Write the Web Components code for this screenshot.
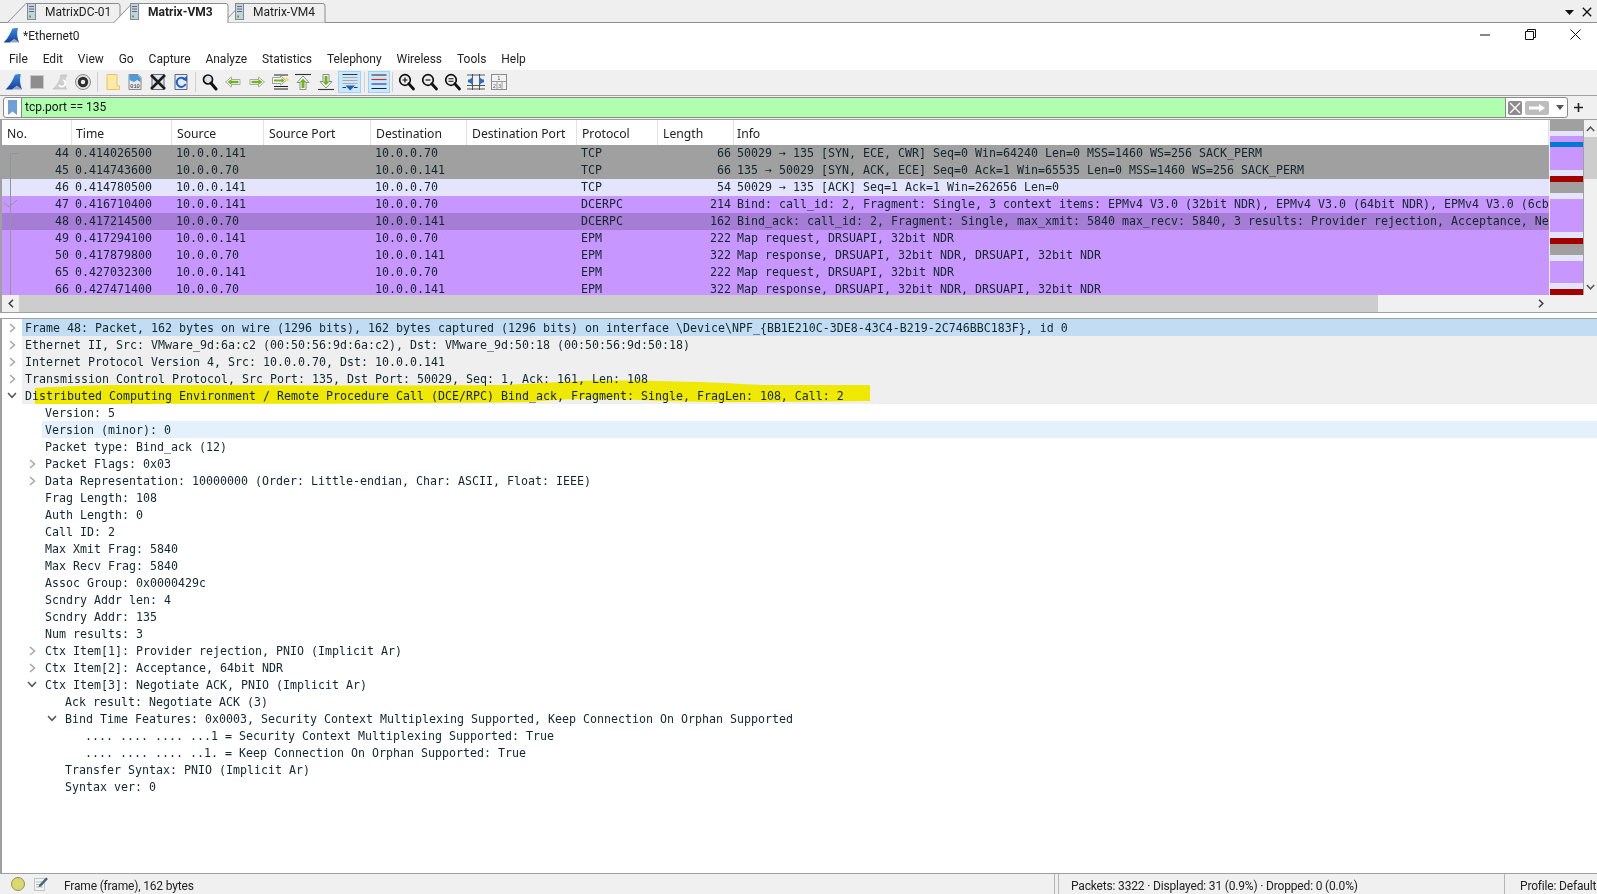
<!DOCTYPE html>
<html>
<head>
<meta charset="utf-8">
<title>Wireshark</title>
<style>
  html, body { margin: 0; padding: 0; height: 100%; overflow: hidden; background: #fff; }
  body { display: flex; flex-direction: column; height: 894px; font: 12px Roboto, "Noto Sans", sans-serif; color: #111; }
</style>
</head>
<body>
<ws-tabbar></ws-tabbar>
<ws-titlebar title-text="*Ethernet0"></ws-titlebar>
<ws-menubar></ws-menubar>
<ws-toolbar></ws-toolbar>
<ws-filterbar value="tcp.port == 135"></ws-filterbar>
<ws-packetlist></ws-packetlist>
<ws-treepane></ws-treepane>
<ws-statusbar></ws-statusbar>

<script>
const MONO = '"DejaVu Sans Mono", "Liberation Mono", monospace';

const SHARK = (id) => `
  <defs><linearGradient id="${id}" x1="0" y1="0" x2="0" y2="1"><stop offset="0" stop-color="#3d8ae0"/><stop offset="1" stop-color="#123f9e"/></linearGradient></defs>
  <path d="M.5 16.5 C5 13 8 6 10 1.7 C12 1 14 1 15.8 1.2 C14.5 6 14.8 11 17 16.5 L12 13 L7 16.5 Z" fill="url(#${id})"/>
  <path d="M7 16.5 L12 12.6 L17 16.5 Z" fill="#9aa8b8"/>`;

const ICONS = {
  shark: SHARK("fin"),
  stop: `<rect x="2.5" y="2.5" width="13" height="13" fill="#8e8e8e" stroke="#c9c9c9"/>`,
  restart: `<path d="M2 16 C6 13 9 8 10 2 L16 2 C13 7 13 12 15.5 16 Z" fill="#cfcfcf" stroke="#bdbdbd" stroke-width=".7"/><path d="M8 12 A3.4 3.4 0 1 0 12 7" fill="none" stroke="#fff" stroke-width="1.6"/>`,
  gear: `<circle cx="9" cy="9" r="7.5" fill="#e2e2e2" stroke="#8a8a8a"/><circle cx="9" cy="9" r="5.2" fill="#2e2e2e"/><circle cx="9" cy="9" r="2.2" fill="#eee"/>`,
  folder: `<path d="M3 1.5 H13 V13 H15.5 V16.5 H3 Z" fill="#fdeaa6" stroke="#eec25a"/>`,
  file: `<path d="M3 1.5 H12 L15 4.5 V16.5 H3 Z" fill="#e8e8e8" stroke="#888"/><path d="M3.5 2 H11.5 L14.5 5 V9 L11 7 L8 9 L3.5 7 Z" fill="#4a9be0"/><text x="9" y="14.6" font-size="5.4" font-family="Liberation Mono" text-anchor="middle" fill="#333">010</text>`,
  close: `<path d="M3 1.5 H15 V16.5 H3 Z" fill="#dfe6ee" stroke="#667"/><path d="M2 2 L16 16 M16 2 L2 16" stroke="#1d1d1d" stroke-width="2.6"/>`,
  reload: `<path d="M3 1.5 H15 V16.5 H3 Z" fill="#e4ebf2" stroke="#667"/><path d="M13 6.5 A4.6 4.6 0 1 0 13.6 11" fill="none" stroke="#1b63c8" stroke-width="2"/><path d="M10.5 6.5 L15 3 L15 8.5 Z" fill="#1b63c8"/>`,
  find: `<circle cx="7" cy="6.5" r="4.5" fill="#dde2e6" stroke="#111" stroke-width="1.7"/><path d="M10 10 L15 16" stroke="#111" stroke-width="3" stroke-linecap="round"/>`,
  back: `<path d="M1.5 9 L7.5 4 V6.5 H16 V11.5 H7.5 V14 Z" fill="#fff" stroke="#a8a8a8"/><path d="M3.5 9 L7.5 6 V7.8 H14.5 V10.2 H7.5 V12 Z" fill="#6db51e"/>`,
  forward: `<path d="M16.5 9 L10.5 4 V6.5 H2 V11.5 H10.5 V14 Z" fill="#fff" stroke="#a8a8a8"/><path d="M14.5 9 L10.5 6 V7.8 H3.5 V10.2 H10.5 V12 Z" fill="#6db51e"/>`,
  go: `<path d="M3 2 H17 M3 16 H17 M3 13.5 H17" stroke="#222" stroke-width="1.1"/><path d="M1.5 4.5 H9.5 V2.8 L15 7.5 L9.5 12 V10.5 H1.5 Z" fill="#fff" stroke="#8a8a8a" stroke-width=".8"/><path d="M3 6.6 H10.5 V5 L13.5 7.5 L10.5 10 V8.5 H3 Z" fill="#6db51e"/><rect x="14.5" y="5" width="3" height="3" fill="#f3e64a"/>`,
  first: `<path d="M1 1.5 H17" stroke="#333" stroke-width="1.1"/><path d="M9 3 L15 9.5 H12 V16.5 H6 V9.5 H3 Z" fill="#fff" stroke="#8a8a8a"/><path d="M9 5.5 L12.5 9.5 H10.5 V15 H7.5 V9.5 H5.5 Z" fill="#6db51e"/>`,
  last: `<path d="M1 16.5 H17" stroke="#333" stroke-width="1.1"/><path d="M9 15 L15 8.5 H12 V1.5 H6 V8.5 H3 Z" fill="#fff" stroke="#8a8a8a"/><path d="M9 12.5 L12.5 8.5 H10.5 V3 H7.5 V8.5 H5.5 Z" fill="#6db51e"/>`,
  autoscroll: `<path d="M1.5 4.5 H16.5 M1.5 7.5 H16.5 M1.5 10.5 H16.5" stroke="#aaa" stroke-width="1"/><path d="M1.5 1.5 H16.5 M1.5 14.5 H5 M13 14.5 H16.5" stroke="#333" stroke-width="1.2"/><path d="M4.5 12.5 H14 L9.2 17.5 Z" fill="#1d5fb0"/>`,
  colorize: `<path d="M1.5 2 H16.5 M1.5 15.5 H16.5" stroke="#222" stroke-width="1.2"/><path d="M1.5 6.5 H16.5" stroke="#d22d2d" stroke-width="1.2"/><path d="M1.5 11 H16.5" stroke="#2a3fa8" stroke-width="1.2"/>`,
  zoomin: `<circle cx="7" cy="7" r="5.3" fill="#eee" stroke="#111" stroke-width="1.7"/><path d="M4.5 7 H9.5 M7 4.5 V9.5" stroke="#111" stroke-width="1.2"/><path d="M10.8 10.8 L15.5 16" stroke="#111" stroke-width="2.8" stroke-linecap="round"/>`,
  zoomout: `<circle cx="7" cy="7" r="5.3" fill="#eee" stroke="#111" stroke-width="1.7"/><path d="M4.5 7 H9.5" stroke="#111" stroke-width="1.2"/><path d="M10.8 10.8 L15.5 16" stroke="#111" stroke-width="2.8" stroke-linecap="round"/>`,
  zoomreset: `<circle cx="7" cy="7" r="5.3" fill="#eee" stroke="#111" stroke-width="1.7"/><path d="M4.5 5.8 H9.5 M4.5 8.2 H9.5" stroke="#111" stroke-width="1.1"/><path d="M10.8 10.8 L15.5 16" stroke="#111" stroke-width="2.8" stroke-linecap="round"/>`,
  resize: `<path d="M0 2 H18 M0 16 H18 M0 12.5 H18 M5.5 1 V17 M12.5 1 V17" stroke="#444" stroke-width=".9"/><path d="M1 8 L5.5 4 V12 Z M17 8 L12.5 4 V12 Z" fill="#2a6fc0"/><rect x="1" y="6.5" width="5" height="3" fill="#2a6fc0"/><rect x="12" y="6.5" width="5" height="3" fill="#2a6fc0"/>`,
  layout: `<rect x="1.5" y="1.5" width="15" height="15" fill="#f2f2f2" stroke="#8a8a8a"/><path d="M1.5 8.5 H16.5 M7 8.5 V16.5 M12 8.5 V16.5" stroke="#9a9a9a"/><g font-size="5" font-family="Liberation Sans" fill="#555" text-anchor="middle"><text x="9" y="6.6">1</text><text x="4.4" y="14.6">2</text><text x="9.6" y="14.6">3</text></g>`
};

const svgIcon = (name, size = 18) => `<svg width="${size}" height="${size}" viewBox="0 0 18 18" aria-hidden="true">${ICONS[name]}</svg>`;

class WsTab extends HTMLElement {
  constructor() {
    super();
    this.attachShadow({ mode: "open" });
    const active = this.hasAttribute("active");
    const w = +this.getAttribute("w");
    const fill = active ? "#fff" : "#efefef";
    this.shadowRoot.innerHTML = `
      <style>
        :host { display: block; position: relative; width: ${w}px; height: 23px; margin-left: ${this.getAttribute("ml") || 0}px; ${active ? "z-index:2;" : ""} }
        svg.shape { position: absolute; left: 0; top: 0; }
        .in { position: relative; display: flex; align-items: center; height: 24px; padding-left: ${this.getAttribute("pl")}px; font-weight: ${active ? 700 : 400}; color: #222; white-space: nowrap; }
      </style>
      <svg class="shape" width="${w}" height="23"><path d="M0.5 ${active ? 23 : 22.5} L19 3.5 H${w - 3} Q${w - 1} 3.5 ${w - 1} 6 V${active ? 23 : 22.5}" fill="${fill}" stroke="#8d8d8d"/></svg>
      <div class="in">
        <svg width="9" height="17" viewBox="0 0 9 17" style="margin-top:-2px"><rect x=".5" y=".5" width="8" height="16" fill="#c5d2de" stroke="#7e8c99"/><path d="M2 3.5 H7 M2 6 H7 M2 8.5 H7" stroke="#5e6e7c"/><rect x="2" y="12.5" width="2" height="2" fill="#58a83c"/></svg>
        <span style="margin-left:9px"><slot></slot></span>
      </div>`;
  }
}
customElements.define("ws-tab", WsTab);

class WsTabbar extends HTMLElement {
  constructor() {
    super();
    this.attachShadow({ mode: "open" });
    this.shadowRoot.innerHTML = `
      <style>
        :host { display: flex; align-items: flex-start; height: 23px; background: #efefef; position: relative; padding-left: 7px; box-sizing: border-box; flex: none; }
        .line { position: absolute; left: 0; right: 0; top: 22px; height: 1px; background: #8d8d8d; }
        .right { margin-left: auto; display: flex; align-items: center; gap: 8px; height: 24px; padding-right: 5px; }
      </style>
      <div class="line"></div>
      <slot></slot>
      <div class="right">
        <svg width="9" height="5" viewBox="0 0 9 5"><path d="M0 0 H9 L4.5 5 Z" fill="#111"/></svg>
        <svg width="10" height="10" viewBox="0 0 10 10"><path d="M.8 .8 L9.2 9.2 M9.2 .8 L.8 9.2" stroke="#111" stroke-width="1.3"/></svg>
      </div>`;
    this.innerHTML = `
      <ws-tab w="114" pl="20">MatrixDC-01</ws-tab>
      <ws-tab w="116" ml="-8" pl="17" active>Matrix-VM3</ws-tab>
      <ws-tab w="103" ml="-6" pl="12">Matrix-VM4</ws-tab>`;
  }
}
customElements.define("ws-tabbar", WsTabbar);

class WsTitlebar extends HTMLElement {
  constructor() {
    super();
    this.attachShadow({ mode: "open" });
    this.shadowRoot.innerHTML = `
      <style>
        :host { display: flex; align-items: center; height: 24px; background: #fff; flex: none; padding-left: 3px; color: #222; }
        .name { margin-left: 3px; padding-top: 2px; }
        .ctl { margin-left: auto; display: flex; padding-bottom: 2px; }
        .ctl span { width: 45px; display: flex; justify-content: center; }
      </style>
      ${svgIcon("shark").replace(/fin/g, "fin2").replace('width="18"', 'width="17"').replace('height="18"', 'height="17"')}
      <span class="name">${this.getAttribute("title-text")}</span>
      <div class="ctl">
        <span><svg width="11" height="11" viewBox="0 0 11 11"><path d="M0 6 H10" stroke="#111"/></svg></span>
        <span><svg width="11" height="11" viewBox="0 0 11 11"><path d="M.5 2.5 H8.5 V10.5 H.5 Z M2.5 2.5 V.5 H10.5 V8.5 H8.5" fill="none" stroke="#111"/></svg></span>
        <span style="width:43px;margin-left:1.5px"><svg width="11" height="11" viewBox="0 0 11 11"><path d="M.5 .5 L10.5 10.5 M10.5 .5 L.5 10.5" stroke="#111"/></svg></span>
      </div>`;
  }
}
customElements.define("ws-titlebar", WsTitlebar);

class WsMenubar extends HTMLElement {
  constructor() {
    super();
    this.attachShadow({ mode: "open" });
    const items = ["File", "Edit", "View", "Go", "Capture", "Analyze", "Statistics", "Telephony", "Wireless", "Tools", "Help"];
    this.shadowRoot.innerHTML = `
      <style>
        :host { display: flex; align-items: center; height: 23px; background: #fff; flex: none; padding-left: 1.5px; box-sizing: border-box; color: #222; }
        span { padding: 0 7.45px; }
      </style>
      ${items.map((m) => `<span>${m}</span>`).join("")}`;
  }
}
customElements.define("ws-menubar", WsMenubar);

class WsToolbar extends HTMLElement {
  constructor() {
    super();
    this.attachShadow({ mode: "open" });
    const groups = [
      ["shark", "stop", "restart", "gear"],
      ["folder", "file", "close", "reload"],
      ["find", "back", "forward", "go", "first", "last", "autoscroll*"],
      ["colorize*"],
      ["zoomin", "zoomout", "zoomreset", "resize", "layout"]
    ];
    const slots = [22.8, 22.8, 23.25, 22.8, 23.2];
    const seps = [3, 2.5, 2.7, 1.9];
    const btn = (n, w) => {
      const on = n.endsWith("*");
      return `<span class="b${on ? " on" : ""}" style="width:${w}px">${svgIcon(n.replace("*", ""))}</span>`;
    };
    this.shadowRoot.innerHTML = `
      <style>
        :host { display: flex; align-items: center; height: 26px; background: #f0f0f0; border-bottom: 1px solid #a0a0a0; box-sizing: border-box; padding: 0 0 2px 3px; flex: none; }
        .b { height: 22px; display: flex; align-items: center; justify-content: center; box-sizing: border-box; }
        .b.on { background: #cce8ff; border: 1px solid #99d1ff; }
        .sep { width: 1px; height: 20px; background: #cfcfcf; }
      </style>
      ${groups.map((g, i) => g.map((n) => btn(n, slots[i])).join("") + (i < seps.length ? `<i class="sep" style="margin:0 ${seps[i]}px"></i>` : "")).join("")}`;
  }
}
customElements.define("ws-toolbar", WsToolbar);

class WsFilterbar extends HTMLElement {
  constructor() {
    super();
    this.attachShadow({ mode: "open" });
    this.shadowRoot.innerHTML = `
      <style>
        :host { display: flex; align-items: center; height: 24px; background: #f0f0f0; border-bottom: 1px solid #a0a0a0; box-sizing: border-box; padding: 0 0 1px 3px; flex: none; }
        .field { flex: 1; height: 21px; display: flex; align-items: stretch; border: 1px solid #8a8a8a; border-radius: 3px; background: #fff; box-sizing: border-box; margin-top: 1px; }
        .mark { width: 17px; display: flex; align-items: center; justify-content: center; border-right: 1px solid #8a8a8a; }
        .val { flex: 1; background: #afffaf; padding-left: 3px; line-height: 19px; color: #111; font-size: 12px; }
        .tools { width: 62px; display: flex; align-items: center; padding-left: 2px; gap: 3px; box-sizing: border-box; border-left: 1px solid #8a8a8a; }
        .plus { width: 29px; display: flex; padding-left: 6px; box-sizing: border-box; }
      </style>
      <div class="field">
        <div class="mark"><svg width="9" height="15" viewBox="0 0 9 15"><path d="M0 0 H9 V15 L4.5 11.5 L0 15 Z" fill="#6e9fd8"/></svg></div>
        <div class="val">${this.getAttribute("value")}</div>
        <div class="tools">
          <svg width="14" height="14" viewBox="0 0 14 14"><rect width="14" height="14" rx="2" fill="#8c8c8c"/><path d="M2 2 L12 12 M12 2 L2 12" stroke="#fff" stroke-width="1.4"/></svg>
          <svg width="24" height="14" viewBox="0 0 24 14"><rect width="24" height="14" rx="2" fill="#bdbdbd"/><path d="M4 5.5 H14 V3 L20 7 L14 11 V8.5 H4 Z" fill="#fff"/></svg>
          <svg style="margin-left:4px" width="8" height="5" viewBox="0 0 8 5"><path d="M0 0 H8 L4 5 Z" fill="#555"/></svg>
        </div>
      </div>
      <div class="plus"><svg width="9" height="9" viewBox="0 0 9 9"><path d="M4.5 0 V9 M0 4.5 H9" stroke="#222" stroke-width="1.6"/></svg></div>`;
  }
}
customElements.define("ws-filterbar", WsFilterbar);

class WsPacketlist extends HTMLElement {
  constructor() {
    super();
    this.attachShadow({ mode: "open" });
    this.packets = [
      [44, "0.414026500", "10.0.0.141", "10.0.0.70", "TCP", 66, "50029 → 135 [SYN, ECE, CWR] Seq=0 Win=64240 Len=0 MSS=1460 WS=256 SACK_PERM", "g"],
      [45, "0.414743600", "10.0.0.70", "10.0.0.141", "TCP", 66, "135 → 50029 [SYN, ACK, ECE] Seq=0 Ack=1 Win=65535 Len=0 MSS=1460 WS=256 SACK_PERM", "g"],
      [46, "0.414780500", "10.0.0.141", "10.0.0.70", "TCP", 54, "50029 → 135 [ACK] Seq=1 Ack=1 Win=262656 Len=0", "l"],
      [47, "0.416710400", "10.0.0.141", "10.0.0.70", "DCERPC", 214, "Bind: call_id: 2, Fragment: Single, 3 context items: EPMv4 V3.0 (32bit NDR), EPMv4 V3.0 (64bit NDR), EPMv4 V3.0 (6cb71c2c-9812-4540-0300-000000000000)", "p"],
      [48, "0.417214500", "10.0.0.70", "10.0.0.141", "DCERPC", 162, "Bind_ack: call_id: 2, Fragment: Single, max_xmit: 5840 max_recv: 5840, 3 results: Provider rejection, Acceptance, Negotiate ACK", "s"],
      [49, "0.417294100", "10.0.0.141", "10.0.0.70", "EPM", 222, "Map request, DRSUAPI, 32bit NDR", "p"],
      [50, "0.417879800", "10.0.0.70", "10.0.0.141", "EPM", 322, "Map response, DRSUAPI, 32bit NDR, DRSUAPI, 32bit NDR", "p"],
      [65, "0.427032300", "10.0.0.141", "10.0.0.70", "EPM", 222, "Map request, DRSUAPI, 32bit NDR", "p"],
      [66, "0.427471400", "10.0.0.70", "10.0.0.141", "EPM", 322, "Map response, DRSUAPI, 32bit NDR, DRSUAPI, 32bit NDR", "p"]
    ];
    this.render();
  }

  render() {
    const heads = ["No.", "Time", "Source", "Source Port", "Destination", "Destination Port", "Protocol", "Length", "Info"];
    const mapBands = [[11, "#a0a0a0"], [5, "#e4e4fc"], [6, "#c797ff"], [5, "#0078d7"], [23, "#c797ff"], [6, "#e4e4fc"], [6, "#a40000"], [11, "#a0a0a0"], [6, "#e4e4fc"], [33, "#c797ff"], [6, "#e4e4fc"], [6, "#a40000"], [11, "#a0a0a0"], [6, "#e4e4fc"], [22, "#c797ff"], [6, "#e4e4fc"], [6, "#a40000"]];
    this.shadowRoot.innerHTML = `
      <style>
        :host { display: block; flex: none; background: #f0f0f0; }
        .top { display: flex; height: 175px; border-left: 2px solid #a0a0a0; box-sizing: border-box; }
        .list { width: 1547px; position: relative; overflow: hidden; flex: none; background: #fff; }
        .cols { display: grid; grid-template-columns: 70px 100px 92px 107px 96px 110px 81px 76px 815px; }
        .head { height: 25px; align-items: center; color: #222; font: 12.2px "Noto Sans", sans-serif; }
        .head span { padding-left: 5px; height: 25px; line-height: 27px; border-right: 1px solid #e2e2e2; box-sizing: border-box; }
        .head span:nth-child(2) { padding-left: 4px; }
        .head span:nth-child(9) { padding-left: 3px; }
        .row { height: 17px; font: 11.635px/17px ${MONO}; color: #12272e; white-space: nowrap; }
        .row span { padding-left: 4px; overflow: hidden; }
        .row .r { text-align: right; padding: 0 3px 0 0; }
        .row .t { padding-left: 3px; }
        .row .i { padding-left: 3px; }
        .g { background: #a0a0a0; }
        .l { background: #e4e4fc; }
        .p { background: #c797ff; }
        .s { background: #a67dd5; }
        .gutter { position: absolute; left: 0; top: 25px; pointer-events: none; }
        .map { width: 33px; margin-left: 1px; border-right: 1px solid #a0a0a0; box-sizing: content-box; flex: none; background: #fff; }
        .map div { width: 100%; }
        .vbar { flex: 1; display: flex; flex-direction: column; align-items: stretch; background: #f0f0f0; }
        .vbar .btn { height: 17px; display: flex; align-items: center; justify-content: center; flex: none; }
        .vbar .thumb { height: 42px; background: #cdcdcd; flex: none; }
        .vbar .fill { flex: 1; }
        .hbar { display: flex; height: 17px; align-items: stretch; border-left: 2px solid #a0a0a0; border-bottom: 1px solid #a0a0a0; box-sizing: content-box; }
        .hbar .btn { width: 17px; display: flex; align-items: center; justify-content: center; flex: none; }
        .hbar .thumb { width: 1359px; background: #cdcdcd; flex: none; }
        .hbar .fill { width: 154px; flex: none; }
        .split { height: 5px; background: #fff; border-bottom: 1px solid #a0a0a0; }
      </style>
      <div class="top">
        <div class="list">
          <div class="cols head">${heads.map((h) => `<span>${h}</span>`).join("")}</div>
          ${this.packets.map((p) => `
            <div class="cols row ${p[7]}">
              <span class="r">${p[0]}</span><span class="t">${p[1]}</span><span>${p[2]}</span><span></span><span>${p[3]}</span><span></span><span>${p[4]}</span><span class="r">${p[5]}</span><span class="i">${p[6]}</span>
            </div>`).join("")}
          <svg class="gutter" width="20" height="150"><path d="M17 8.5 H8.5 V150" fill="none" stroke="#8a9a9a" stroke-width="1"/><path d="M2 58 L7 62 L15 55" fill="none" stroke="#8a9a9a" stroke-width="1"/></svg>
        </div>
        <div class="map">${mapBands.map(([h, c]) => `<div style="height:${h}px;background:${c}"></div>`).join("")}</div>
        <div class="vbar">
          <div class="btn"><svg width="9" height="6" viewBox="0 0 9 6"><path d="M.8 5 L4.5 1.2 L8.2 5" fill="none" stroke="#555" stroke-width="1.5"/></svg></div>
          <div class="thumb"></div><div class="fill"></div>
          <div class="btn"><svg width="9" height="6" viewBox="0 0 9 6"><path d="M.8 1 L4.5 4.8 L8.2 1" fill="none" stroke="#555" stroke-width="1.5"/></svg></div>
        </div>
      </div>
      <div class="hbar">
        <div class="btn"><svg width="6" height="9" viewBox="0 0 6 9"><path d="M5 .8 L1.2 4.5 L5 8.2" fill="none" stroke="#444" stroke-width="1.6"/></svg></div>
        <div class="thumb"></div>
        <div class="fill"></div>
        <div class="btn"><svg width="6" height="9" viewBox="0 0 6 9"><path d="M1 .8 L4.8 4.5 L1 8.2" fill="none" stroke="#444" stroke-width="1.6"/></svg></div>
      </div>
      <div class="split"></div>`;
  }
}
customElements.define("ws-packetlist", WsPacketlist);

class WsTreepane extends HTMLElement {
  constructor() {
    super();
    this.attachShadow({ mode: "open" });
    // level, arrow (c collapsed, e expanded, "" leaf), background class, label
    this.rows = [
      [0, "c", "sel", "Frame 48: Packet, 162 bytes on wire (1296 bits), 162 bytes captured (1296 bits) on interface \\Device\\NPF_{BB1E210C-3DE8-43C4-B219-2C746BBC183F}, id 0"],
      [0, "c", "par", "Ethernet II, Src: VMware_9d:6a:c2 (00:50:56:9d:6a:c2), Dst: VMware_9d:50:18 (00:50:56:9d:50:18)"],
      [0, "c", "par", "Internet Protocol Version 4, Src: 10.0.0.70, Dst: 10.0.0.141"],
      [0, "c", "par", "Transmission Control Protocol, Src Port: 135, Dst Port: 50029, Seq: 1, Ack: 161, Len: 108"],
      [0, "e", "par", "Distributed Computing Environment / Remote Procedure Call (DCE/RPC) Bind_ack, Fragment: Single, FragLen: 108, Call: 2"],
      [1, "", "", "Version: 5"],
      [1, "", "hov", "Version (minor): 0"],
      [1, "", "", "Packet type: Bind_ack (12)"],
      [1, "c", "", "Packet Flags: 0x03"],
      [1, "c", "", "Data Representation: 10000000 (Order: Little-endian, Char: ASCII, Float: IEEE)"],
      [1, "", "", "Frag Length: 108"],
      [1, "", "", "Auth Length: 0"],
      [1, "", "", "Call ID: 2"],
      [1, "", "", "Max Xmit Frag: 5840"],
      [1, "", "", "Max Recv Frag: 5840"],
      [1, "", "", "Assoc Group: 0x0000429c"],
      [1, "", "", "Scndry Addr len: 4"],
      [1, "", "", "Scndry Addr: 135"],
      [1, "", "", "Num results: 3"],
      [1, "c", "", "Ctx Item[1]: Provider rejection, PNIO (Implicit Ar)"],
      [1, "c", "", "Ctx Item[2]: Acceptance, 64bit NDR"],
      [1, "e", "", "Ctx Item[3]: Negotiate ACK, PNIO (Implicit Ar)"],
      [2, "", "", "Ack result: Negotiate ACK (3)"],
      [2, "e", "", "Bind Time Features: 0x0003, Security Context Multiplexing Supported, Keep Connection On Orphan Supported"],
      [3, "", "", ".... .... .... ...1 = Security Context Multiplexing Supported: True"],
      [3, "", "", ".... .... .... ..1. = Keep Connection On Orphan Supported: True"],
      [2, "", "", "Transfer Syntax: PNIO (Implicit Ar)"],
      [2, "", "", "Syntax ver: 0"]
    ];
    this.render();
  }

  arrow(kind) {
    if (kind === "c") return `<svg width="7" height="10" viewBox="0 0 7 10"><path d="M1 1 L5.5 5 L1 9" fill="none" stroke="#a6a6a6" stroke-width="1.5"/></svg>`;
    if (kind === "e") return `<svg width="10" height="7" viewBox="0 0 10 7"><path d="M1 1 L5 5.3 L9 1" fill="none" stroke="#555" stroke-width="1.5"/></svg>`;
    return "";
  }

  render() {
    this.shadowRoot.innerHTML = `
      <style>
        :host { display: block; flex: 1; min-height: 0; position: relative; overflow: hidden; background: #fff; border-left: 2px solid #a0a0a0; box-sizing: border-box; font: 11.635px/17px ${MONO}; color: #12272e; }
        .row { height: 17px; display: flex; white-space: nowrap; }
        .tw { flex: none; display: flex; align-items: center; justify-content: center; width: 20px; }
        .txt { flex: 1; padding-left: 3px; line-height: 19px; }
        .sel .txt { background: #c1dcf3; }
        .par .txt { background: #efefef; }
        .hov .txt { background: #e4f1fc; }
        .mark { position: absolute; left: -2px; top: 0; mix-blend-mode: multiply; pointer-events: none; }
      </style>
      ${this.rows.map(([lv, a, bg, label]) => `
        <div class="row ${bg}" style="padding-left:${lv * 20}px"><span class="tw">${this.arrow(a)}</span><span class="txt">${label}</span></div>`).join("")}
      <svg class="mark" width="900" height="100"><path d="M35 69 C70 67 90 66 130 66 C250 66 400 67 500 66 C530 65 560 63 580 62 C620 61 660 62 700 63 C730 64 750 66 767 66 L870 66 L870 82 C780 83 700 84 640 81 C600 79 570 79 530 83 C400 85 200 85 35 85 Z" fill="#fff800"/></svg>`;
  }
}
customElements.define("ws-treepane", WsTreepane);

class WsStatusbar extends HTMLElement {
  constructor() {
    super();
    this.attachShadow({ mode: "open" });
    this.shadowRoot.innerHTML = `
      <style>
        :host { display: flex; align-items: center; height: 21px; flex: none; background: #f0f0f0; border-top: 1px solid #a0a0a0; box-sizing: border-box; color: #222; padding-left: 11px; overflow: hidden; white-space: nowrap; letter-spacing: -.17px; }
        .led { width: 14px; height: 14px; border-radius: 50%; background: #d9d96e; border: 1px solid #8f8f5a; box-sizing: border-box; margin-right: 8px; flex: none; }
        .sec { flex: none; padding-top: 4px; }
        .bar { width: 1px; height: 20px; background: #b5b5b5; flex: none; }
      </style>
      <span class="led"></span>
      <svg width="16" height="16" viewBox="0 0 16 16" style="flex:none;margin-right:15px"><rect x="1.5" y="2.5" width="10" height="12" fill="#f3f3f3" stroke="#c4c4c4"/><path d="M3 6 H10 M3 8.5 H10 M3 11 H10" stroke="#bbb"/><path d="M6 9 L13 1.5 L15 3 L8 10.5 L5.5 11 Z" fill="#3b6a80"/></svg>
      <span class="sec" style="width:990px">Frame (frame), 162 bytes</span>
      <i class="bar"></i><i class="bar" style="margin-left:3px"></i>
      <span class="sec" style="width:445px;padding-left:12px;box-sizing:border-box">Packets: 3322 · Displayed: 31 (0.9%) · Dropped: 0 (0.0%)</span>
      <i class="bar"></i>
      <span class="sec" style="padding-left:15px">Profile: Default</span>`;
  }
}
customElements.define("ws-statusbar", WsStatusbar);
</script>
</body>
</html>
